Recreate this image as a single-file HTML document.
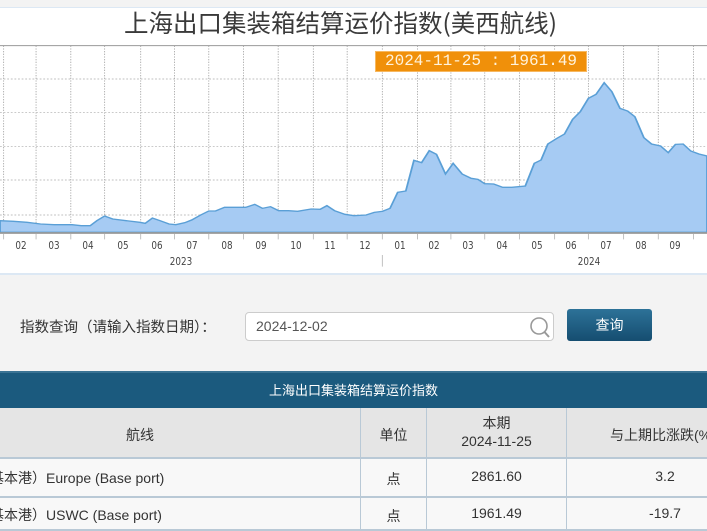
<!DOCTYPE html>
<html><head><meta charset="utf-8"><style>
*{margin:0;padding:0;box-sizing:border-box}
body{width:707px;height:530px;overflow:hidden;background:#f3f3f3;font-family:"Liberation Sans","Noto Sans CJK SC",sans-serif;position:relative}
.abs{position:absolute}
#panel{left:0;top:7px;width:707px;height:268px;background:#fff;border-top:1px solid #dce8f4;border-bottom:2px solid #dce8f4}
.ml{position:absolute;top:239px;font-size:11px;color:#444;width:20px;text-align:center;font-family:"DejaVu Sans",sans-serif;transform:scaleX(0.8)}
.c{position:absolute;color:#333;font-size:14px;text-align:center;white-space:nowrap;overflow:hidden}
.vl{position:absolute;width:1px;background:#b9c9d6}
.hl{position:absolute;left:0;width:707px;height:2px;background:#b9c9d6}
</style></head><body>
<div class="abs" id="panel"></div>
<div class="abs" style="left:-13px;width:707px;top:8px;text-align:center;font-size:24.5px;color:#3a3a3a;font-family:'Noto Sans CJK SC',sans-serif;line-height:30px">上海出口集装箱结算运价指数(美西航线)</div>
<svg class="abs" style="left:0;top:0" width="707" height="280" viewBox="0 0 1568 840" preserveAspectRatio="none">
<g stroke="#aaa" stroke-width="2" stroke-dasharray="4,4" fill="none">
<line x1="0" y1="237" x2="1568" y2="237"/><line x1="0" y1="338" x2="1568" y2="338"/><line x1="0" y1="440" x2="1568" y2="440"/><line x1="0" y1="540" x2="1568" y2="540"/><line x1="0" y1="645" x2="1568" y2="645"/>
<path d="M8 137V697M80 137V697M157 137V697M232 137V697M312 137V697M387 137V697M463 137V697M540 137V697M617 137V697M695 137V697M770 137V697M848 137V697M926 137V697M1000 137V697M1075 137V697M1152 137V697M1230 137V697M1305 137V697M1383 137V697M1460 137V697M1538 137V697"/>
</g>
<line x1="0" y1="137" x2="1568" y2="137" stroke="#999" stroke-width="3"/>
<path fill="#a6cbf3" stroke="#5a9fd6" stroke-width="4" d="M0 662L30 664L60 667L90 672L120 674L160 674L180 677L200 677L215 662L232 648L250 657L280 662L310 667L322 670L338 654L355 662L375 672L390 674L410 668L425 660L445 645L463 633L478 633L498 622L520 622L545 622L565 613L582 625L600 620L618 632L640 632L660 634L690 627L710 628L725 617L742 632L765 643L785 647L812 645L830 637L848 634L865 625L882 577L900 573L918 481L935 488L952 452L968 463L988 522L1005 490L1025 522L1045 535L1060 538L1075 551L1095 552L1115 562L1135 562L1165 558L1185 490L1200 480L1215 432L1235 415L1252 402L1270 358L1287 335L1305 295L1322 283L1340 248L1357 275L1375 325L1392 333L1408 350L1428 413L1445 432L1465 438L1482 458L1498 433L1515 432L1532 453L1550 462L1568 468L1568 697L0 697Z"/>
<line x1="0" y1="699" x2="1568" y2="699" stroke="#999" stroke-width="5"/>
<path stroke="#bbb" stroke-width="2" d="M8 702V718M80 702V718M157 702V718M232 702V718M312 702V718M387 702V718M463 702V718M540 702V718M617 702V718M695 702V718M770 702V718M848 702V718M926 702V718M1000 702V718M1075 702V718M1152 702V718M1230 702V718M1305 702V718M1383 702V718M1460 702V718M1538 702V718M848 765V800"/>
</svg>
<div class="ml" style="left:11px">02</div><div class="ml" style="left:44px">03</div><div class="ml" style="left:78px">04</div><div class="ml" style="left:113px">05</div><div class="ml" style="left:147px">06</div><div class="ml" style="left:182px">07</div><div class="ml" style="left:217px">08</div><div class="ml" style="left:251px">09</div><div class="ml" style="left:286px">10</div><div class="ml" style="left:320px">11</div><div class="ml" style="left:355px">12</div><div class="ml" style="left:390px">01</div><div class="ml" style="left:424px">02</div><div class="ml" style="left:458px">03</div><div class="ml" style="left:492px">04</div><div class="ml" style="left:527px">05</div><div class="ml" style="left:561px">06</div><div class="ml" style="left:596px">07</div><div class="ml" style="left:631px">08</div><div class="ml" style="left:665px">09</div><div class="ml" style="left:699px">1</div>
<div class="ml" style="left:166px;top:255px;width:30px">2023</div>
<div class="ml" style="left:574px;top:255px;width:30px">2024</div>
<div class="abs" style="left:375px;top:51px;width:212px;height:21px;background:#f0900a;border:1px solid #f7b860;color:#fff3dd;font-family:'Liberation Mono',monospace;font-size:16px;line-height:19px;text-align:center">2024-11-25 : 1961.49</div>

<div class="abs" style="left:20px;top:316px;font-size:14.5px;color:#333">指数查询（请输入指数日期）：</div>
<div class="abs" style="left:245px;top:312px;width:309px;height:29px;background:#fff;border:1px solid #ccc;border-radius:4px;font-size:14px;color:#555;padding-left:10px;line-height:27px">2024-12-02</div>
<svg class="abs" style="left:527px;top:314px" width="26" height="26"><circle cx="12" cy="12" r="8" fill="none" stroke="#999" stroke-width="1.6"/><line x1="17.5" y1="18" x2="22" y2="23" stroke="#999" stroke-width="2"/></svg>
<div class="abs" style="left:567px;top:309px;width:85px;height:32px;border-radius:3px;background:linear-gradient(#2d7298,#154d70);color:#fff;text-align:center;line-height:32px;font-size:14px">查询</div>

<div class="abs" style="left:0;top:371px;width:707px;height:37px;background:#1b5a7e;border-top:2px solid #3a7394;color:#fff;text-align:center;line-height:36px;font-size:13px">上海出口集装箱结算运价指数</div>
<div class="abs" style="left:0;top:408px;width:707px;height:50px;background:#e5e5e5"></div>
<div class="abs" style="left:0;top:458px;width:707px;height:72px;background:#f8f8f8"></div>
<div class="hl" style="top:457px"></div><div class="hl" style="top:496px"></div><div class="hl" style="top:529px"></div>
<div class="vl" style="left:360px;top:408px;height:122px"></div>
<div class="vl" style="left:426px;top:408px;height:122px"></div>
<div class="vl" style="left:566px;top:408px;height:122px"></div>
<div class="c" style="left:100px;width:80px;top:425px">航线</div>
<div class="c" style="left:361px;width:65px;top:425px">单位</div>
<div class="c" style="left:427px;width:139px;top:414px;line-height:18px">本期<br>2024-11-25</div>
<div class="c" style="left:610px;width:97px;top:425px;text-align:left">与上期比涨跌(%)</div>
<div class="c" style="left:-10px;top:468px;text-align:left">基本港）Europe (Base port)</div>
<div class="c" style="left:-10px;top:505px;text-align:left">基本港）USWC (Base port)</div>
<div class="c" style="left:361px;width:65px;top:469px">点</div>
<div class="c" style="left:361px;width:65px;top:506px">点</div>
<div class="c" style="left:427px;width:139px;top:468px">2861.60</div>
<div class="c" style="left:427px;width:139px;top:505px">1961.49</div>
<div class="c" style="left:640px;width:50px;top:468px">3.2</div>
<div class="c" style="left:640px;width:50px;top:505px">-19.7</div>
</body></html>
